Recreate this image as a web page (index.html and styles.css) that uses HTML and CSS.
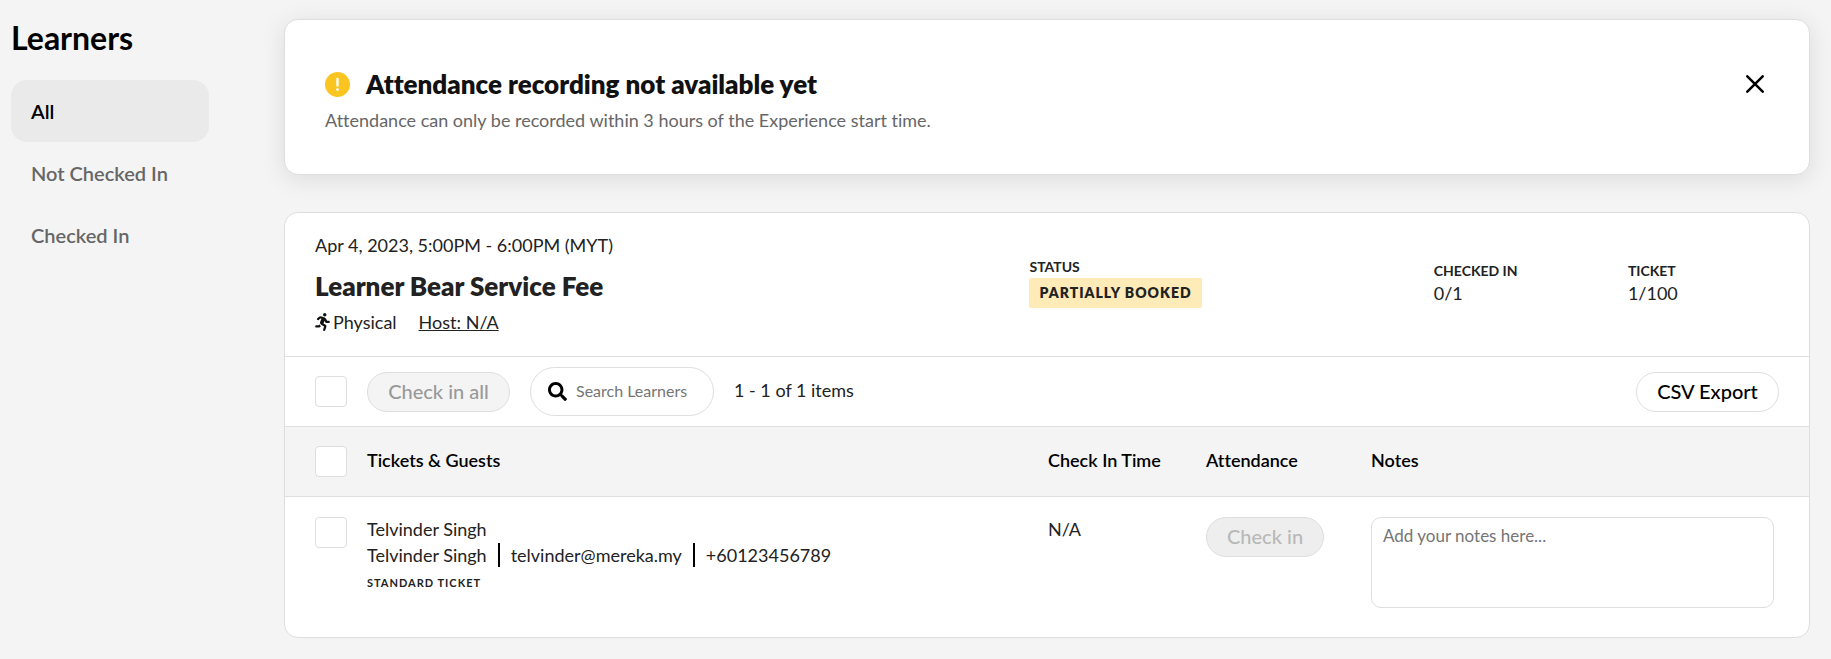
FILE: index.html
```
<!DOCTYPE html>
<html lang="en">

<head>
  <meta charset="UTF-8" />
  <meta name="viewport" content="width=device-width, initial-scale=1.0" />
  <title>Learners</title>
  <link rel="stylesheet" href="styles.css">
</head>

<body>
  <div class="page">
    <aside class="sidebar">
      <h1>Learners</h1>
      <nav class="filters">
        <a href="#all" class="active">All</a>
        <a href="#not-checked-in">Not Checked In</a>
        <a href="#checked-in">Checked In</a>
      </nav>
    </aside>

    <main class="content">
      <!-- Notice -->
      <section class="card notice">
        <div class="notice-head">
          <svg class="notice-icon" viewBox="0 0 25 25" aria-hidden="true">
            <circle cx="12.5" cy="12.5" r="12.5" fill="#fbc521" />
            <path d="M12.5 7v6.5" stroke="#fff" stroke-width="2.4" stroke-linecap="round" />
            <circle cx="12.5" cy="17.6" r="1.4" fill="#fff" />
          </svg>
          <h2>Attendance recording not available yet</h2>
          <button type="button" class="close" aria-label="Close">
            <svg viewBox="0 0 18 18" aria-hidden="true">
              <path d="M1.3 1.3l15.4 15.4M16.7 1.3L1.3 16.7" stroke="#000" stroke-width="2.5" stroke-linecap="round" />
            </svg>
          </button>
        </div>
        <p>Attendance can only be recorded within 3 hours of the Experience start time.</p>
      </section>

      <section class="card">
        <!-- Session summary -->
        <header class="summary">
          <div class="session">
            <p>Apr 4, 2023, 5:00PM - 6:00PM (MYT)</p>
            <h2>Learner Bear Service Fee</h2>
            <div class="meta">
              <svg class="runner" viewBox="0 0 416 512" aria-hidden="true">
                <path fill="#111" d="M272 96c26.510 0 48-21.490 48-48S298.510 0 272 0s-48 21.490-48 48 21.490 48 48 48zM113.690 317.470l-14.800 34.520H32c-17.670 0-32 14.330-32 32s14.330 32 32 32h77.450c19.250 0 36.580-11.440 44.110-29.090l8.790-20.520-10.670-6.300c-17.320-10.230-30.060-25.370-37.990-42.610zM384 223.990h-44.030l-26.060-53.250c-12.500-25.550-35.450-44.230-61.780-50.940l-71.080-21.140c-28.300-6.800-57.770-.55-80.840 17.140l-39.670 30.410c-14.030 10.750-16.690 30.830-5.920 44.860s30.840 16.660 44.860 5.920l39.690-30.410c7.670-5.890 17.440-8 25.270-6.140l14.700 4.370-37.460 87.390c-12.620 29.480-1.310 64.010 26.300 80.310l84.980 50.170-27.470 87.730c-5.280 16.860 4.110 34.810 20.970 40.090 3.190 1 6.410 1.480 9.580 1.480 13.610 0 26.230-8.770 30.520-22.450l31.640-101.060c5.910-20.770-2.890-43.080-21.640-54.390l-61.240-36.140 31.310-78.280 20.270 41.430c8 16.340 24.920 26.890 43.110 26.890H384c17.670 0 32-14.330 32-32s-14.330-31.990-32-31.990z" />
              </svg>
              <span>Physical</span>
              <a href="#host">Host: N/A</a>
            </div>
          </div>
          <div class="stat">
            <span class="label">STATUS</span>
            <span class="badge">PARTIALLY BOOKED</span>
          </div>
          <div class="stat">
            <span class="label">CHECKED IN</span>
            <span>0/1</span>
          </div>
          <div class="stat">
            <span class="label">TICKET</span>
            <span>1/100</span>
          </div>
        </header>

        <!-- Toolbar -->
        <div class="toolbar">
          <input type="checkbox" aria-label="Select all learners">
          <button type="button" class="btn" disabled>Check in all</button>
          <label class="search">
            <svg viewBox="0 0 512 512" aria-hidden="true">
              <path d="M505 442.700L405.300 343c-4.500-4.500-10.600-7-17-7H372c27.600-35.300 44-79.700 44-128C416 93.100 322.900 0 208 0S0 93.100 0 208s93.100 208 208 208c48.300 0 92.700-16.400 128-44v16.300c0 6.400 2.500 12.500 7 17l99.700 99.700c9.400 9.400 24.600 9.400 33.900 0l28.300-28.300c9.400-9.400 9.400-24.600.1-34zM208 336c-70.700 0-128-57.200-128-128 0-70.700 57.200-128 128-128 70.700 0 128 57.200 128 128 0 70.700-57.200 128-128 128z" />
            </svg>
            <input type="text" placeholder="Search Learners" aria-label="Search Learners">
          </label>
          <span class="count">1 - 1 of 1 items</span>
          <button type="button" class="btn export">CSV Export</button>
        </div>

        <!-- Learners table -->
        <table>
          <thead>
            <tr>
              <th class="col-check"><input type="checkbox" aria-label="Select all rows"></th>
              <th class="col-guest">Tickets &amp; Guests</th>
              <th class="col-time">Check In Time</th>
              <th class="col-attendance">Attendance</th>
              <th>Notes</th>
            </tr>
          </thead>
          <tbody>
            <tr>
              <td><input type="checkbox" aria-label="Select Telvinder Singh"></td>
              <td>
                <div class="guest">Telvinder Singh</div>
                <div class="contact">
                  <span>Telvinder Singh</span>
                  <span>telvinder@mereka.my</span>
                  <span>+60123456789</span>
                </div>
                <div class="ticket-type">STANDARD TICKET</div>
              </td>
              <td>N/A</td>
              <td><button type="button" class="btn muted" disabled>Check in</button></td>
              <td><textarea placeholder="Add your notes here..." aria-label="Notes"></textarea></td>
            </tr>
          </tbody>
        </table>
      </section>
    </main>
  </div>
</body>

</html>
```
FILE: styles.css
```
* {
  box-sizing: border-box;
}

body {
  margin: 0;
  font-family: Lato, sans-serif;
  font-size: 18px;
  font-variant-ligatures: none;
  line-height: 26px;
  background-color: #f4f4f4;
  color: #222;
}

h1,
h2,
p {
  margin: 0;
}

button,
input,
textarea {
  font-family: inherit;
  font-variant-ligatures: none;
}

.page {
  display: flex;
}

/* Sidebar */
.sidebar {
  flex: none;
  width: 284px;
  padding: 19px 0 0 11px;
}

.sidebar h1 {
  margin-bottom: 23px;
  font-size: 32px;
  line-height: 38px;
  color: #000;
}

.filters {
  width: 198px;
}

.filters a {
  display: block;
  padding: 18px 20px;
  border-radius: 16px;
  font-size: 20px;
  font-weight: 600;
  color: #666;
  text-decoration: none;
}

.filters a.active {
  background-color: #eaeaea;
  color: #000;
}

/* Cards */
.content {
  flex: 1;
  min-width: 0;
  padding: 19px 21px 20px 0;
}

.card {
  border: 1px solid #dedede;
  border-radius: 14px;
  background-color: #fff;
  overflow: hidden;
}

.notice {
  margin-bottom: 37px;
  padding: 48px 41px 41px 40px;
  box-shadow: 0 4px 24px rgba(0, 0, 0, 0.1);
}

.notice-head {
  display: flex;
  align-items: center;
  margin-bottom: 7px;
}

.notice-icon {
  width: 25px;
  height: 25px;
  margin-right: 16px;
}

.notice h2,
.summary h2 {
  font-size: 26px;
  font-weight: 800;
  line-height: 32px;
}

.notice h2 {
  color: #111;
}

.notice p {
  color: #666;
}

.close {
  display: flex;
  margin-left: auto;
  padding: 4px;
  border: none;
  background: none;
  cursor: pointer;
}

.close svg {
  width: 18px;
  height: 18px;
}

/* Session summary */
.summary {
  display: grid;
  grid-template-columns: 714fr 404fr 194fr 152fr;
  align-items: center;
  padding: 19px 29px 21px 30px;
}

.summary h2 {
  margin: 12px 0 7px;
}

.meta {
  display: flex;
  align-items: center;
}

.meta a {
  margin-left: 22px;
  color: inherit;
}

.runner {
  width: 15px;
  height: 18px;
  margin-right: 3px;
}

.stat {
  display: flex;
  flex-direction: column;
  align-items: flex-start;
  padding-bottom: 4px;
  line-height: 22px;
}

.label {
  font-size: 14px;
  font-weight: 700;
}

.badge {
  padding: 4px 10px;
  border-radius: 2px;
  background-color: #feebb8;
  font-size: 14px;
  font-weight: 800;
  letter-spacing: 1px;
}

/* Toolbar */
.toolbar {
  display: flex;
  align-items: center;
  padding: 10px 30px;
  border-top: 1px solid #dedede;
}

input[type="checkbox"] {
  display: block;
  appearance: none;
  width: 32px;
  height: 31px;
  margin: 0;
  border: 1px solid #dedede;
  border-radius: 4px;
  background-color: #fff;
}

.btn {
  height: 40px;
  padding: 0 20px 2px;
  border: 1px solid #dedede;
  border-radius: 20px;
  background-color: #fff;
  font-size: 20px;
  font-weight: 500;
  color: #000;
  cursor: pointer;
}

.btn:disabled {
  background-color: #f4f4f4;
  color: #999;
  cursor: default;
}

.btn.muted {
  background-color: #eee;
  color: #b8b8b8;
}

.toolbar .btn {
  width: 143px;
}

.toolbar .btn,
.search,
.count {
  margin-left: 20px;
}

.toolbar .export {
  margin-left: auto;
}

.search {
  display: flex;
  align-items: center;
  width: 184px;
  height: 49px;
  padding: 0 17px;
  border: 1px solid #dedede;
  border-radius: 25px;
}

.search svg {
  flex: none;
  width: 19px;
  height: 19px;
  margin-right: 9px;
}

.search input {
  width: 100%;
  min-width: 0;
  padding: 0 0 2px;
  border: none;
  outline: none;
  font-size: 16px;
}

.count {
  padding-bottom: 3px;
}

::placeholder {
  color: #757575;
}

/* Learners table */
table {
  width: 100%;
  border-collapse: collapse;
  table-layout: fixed;
}

th {
  height: 70px;
  padding: 0 0 3px;
  border-top: 1px solid #dedede;
  border-bottom: 1px solid #dedede;
  background-color: #f4f4f4;
  font-weight: 600;
  text-align: left;
  color: #000;
}

td {
  padding: 20px 0 29px;
  line-height: 24px;
  vertical-align: top;
}

th:first-child {
  padding: 0 0 0 30px;
}

td:first-child {
  padding-left: 30px;
}

td:last-child {
  padding-right: 35px;
}

.col-check {
  width: 82px;
}

.col-guest {
  width: 681px;
}

.col-time {
  width: 158px;
}

.col-attendance {
  width: 165px;
}

.contact {
  display: flex;
  margin: 2px 0 4px;
}

.contact span + span {
  margin-left: 11px;
  padding-left: 11px;
  border-left: 2px solid #000;
}

.ticket-type {
  font-size: 11px;
  font-weight: 700;
  letter-spacing: 1px;
}

textarea {
  display: block;
  width: 100%;
  height: 91px;
  padding: 5px 11px;
  border: 1px solid #dedede;
  border-radius: 10px;
  font-size: 17px;
  line-height: 26px;
  resize: none;
}
```
